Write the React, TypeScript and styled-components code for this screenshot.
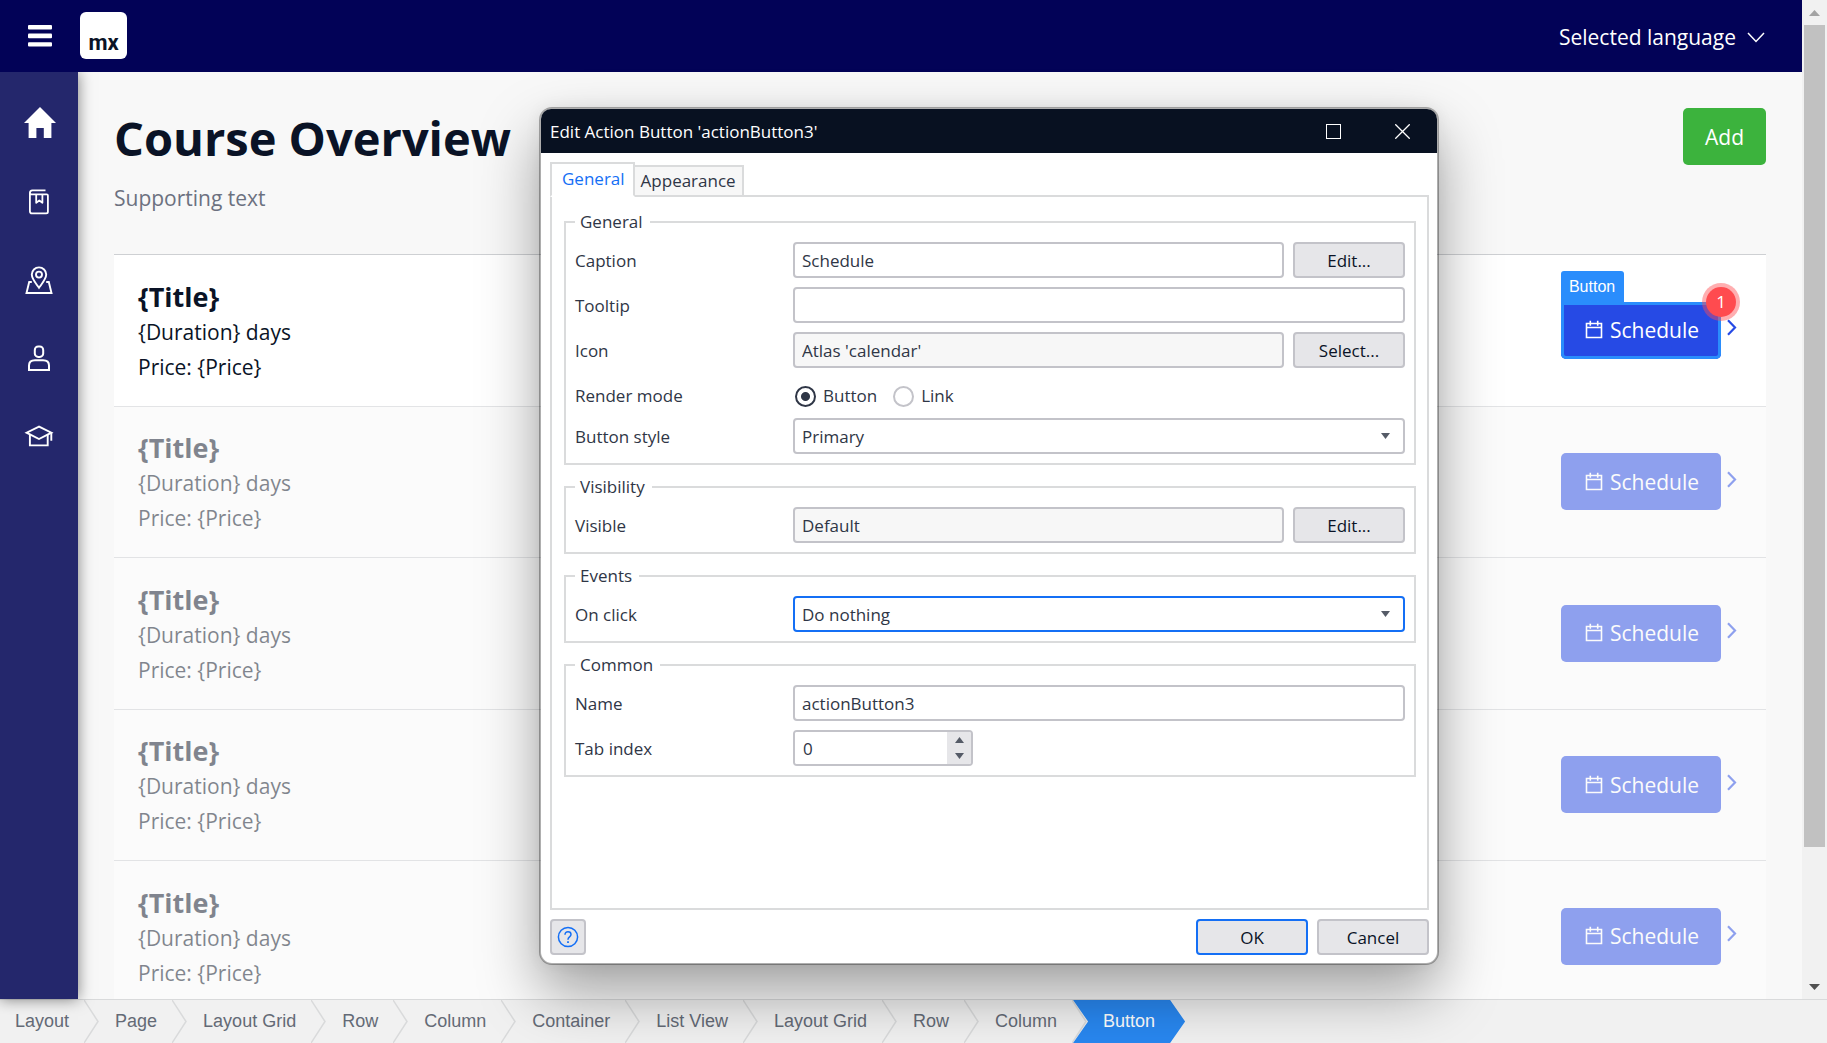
import React, { useState } from "react";
import styled, { createGlobalStyle } from "styled-components";

const sans = `"Open Sans", "Noto Sans", sans-serif`;
const arial = `"Liberation Sans", Arial, sans-serif`;

const GlobalStyle = createGlobalStyle`
  *, *::before, *::after { box-sizing: border-box; }
  body { margin: 0; font-family: ${sans}; font-size: 21px; color: #0a1326; background: #f8f8f8; overflow: hidden; }
  button, input, select { font-family: inherit; }
  svg { display: block; flex: none; }
`;

/* ---------- page shell ---------- */

const Shell = styled.div`
  position: relative;
  display: flex;
  flex-direction: column;
  height: 100vh;
`;

const Viewport = styled.div`
  flex: 1;
  min-height: 0;
  display: flex;
`;

const Page = styled.div`
  flex: 1;
  min-width: 0;
  display: flex;
  flex-direction: column;
`;

const TopBar = styled.header`
  position: relative;
  z-index: 2;
  flex: none;
  height: 72px;
  padding: 0 36px 0 28px;
  display: flex;
  align-items: center;
  background: #020257;
  color: #fff;
`;

const PlainButton = styled.button`
  display: flex;
  align-items: center;
  padding: 0;
  border: 0;
  background: none;
  color: inherit;
  font-size: 21px;
`;

const Logo = styled.div`
  display: flex;
  align-items: flex-end;
  justify-content: center;
  width: 47px;
  height: 47px;
  margin: 0 0 1px 28px;
  padding-bottom: 4px;
  border-radius: 6px;
  background: #fff;
  color: #0a1326;
  font: bold 22px/24px Roboto, sans-serif;
`;

const LanguageButton = styled(PlainButton)`
  gap: 10px;
  margin-left: auto;
  padding-top: 2px;
`;

const Body = styled.div`
  flex: 1;
  min-height: 0;
  display: flex;
`;

const SideBar = styled.nav`
  position: relative;
  z-index: 1;
  flex: none;
  width: 78px;
  padding-top: 13px;
  background: #24276c;
  box-shadow: 0 0 14px rgba(0, 0, 0, 0.5);
`;

const SideLink = styled.a`
  display: flex;
  align-items: center;
  justify-content: center;
  height: 78px;
  color: #fff;
`;

const Main = styled.main`
  flex: 1;
  min-width: 0;
  overflow: hidden;
  padding: 36px 36px 0;
`;

const PageHead = styled.div`
  display: flex;
  align-items: flex-start;
  justify-content: space-between;
  margin-bottom: 38px;
`;

const Heading = styled.h1`
  margin: 0 0 12px;
  font-size: 47px;
  line-height: 61px;
  font-weight: 700;
`;

const Supporting = styled.p`
  margin: 0;
  line-height: 35px;
  color: #6c7180;
`;

const ActionButton = styled.button<{ $tone: "success" | "primary"; $selected?: boolean }>`
  display: flex;
  align-items: center;
  justify-content: center;
  gap: 7px;
  height: 57px;
  padding: ${(p) => (p.$tone === "success" ? "0 22px" : "0 22px 0 24px")};
  border: 0;
  border-radius: 5px;
  background: ${(p) => (p.$tone === "success" ? "#3cb33d" : "#264ae5")};
  color: #fff;
  font-size: 21px;
  ${(p) => p.$selected && "box-shadow: inset 0 0 0 3px #2a8dfc; border-top-left-radius: 0;"}
`;

/* ---------- course list ---------- */

const List = styled.ul`
  display: grid;
  grid-auto-rows: 152px 151px;
  margin: 0;
  padding: 0;
  list-style: none;
  border-top: 1px solid #ced0d3;
`;

const Course = styled.li<{ $faded: boolean }>`
  display: flex;
  align-items: center;
  justify-content: space-between;
  padding: 0 29px 0 24px;
  background: #fff;
  border-bottom: 1px solid ${(p) => (p.$faded ? "#ced0d3" : "#e3e4e6")};
  opacity: ${(p) => (p.$faded ? 0.5 : 1)};
`;

const CourseInfo = styled.div`
  padding-top: 2px;
`;

const CourseTitle = styled.h2`
  margin: 0;
  font-size: 27px;
  line-height: 36px;
  font-weight: 700;
`;

const CourseLine = styled.p`
  margin: 0;
  line-height: 35px;
`;

const CourseActions = styled.div`
  display: flex;
  align-items: center;
  gap: 6px;
  padding-bottom: 1px;
  color: #264ae5;
`;

const Selection = styled.div`
  position: relative;
`;

const SelectionTag = styled.span`
  position: absolute;
  left: 0;
  bottom: 100%;
  padding: 0 9px 0 8px;
  border-radius: 3px 3px 0 0;
  background: #2a8dfc;
  color: #fff;
  font: 16px/31px ${arial};
`;

const StepBadge = styled.span`
  position: absolute;
  top: -15px;
  right: -15px;
  width: 30px;
  height: 30px;
  border-radius: 50%;
  background: #ff4b4f;
  box-shadow: 0 0 0 4px rgba(255, 75, 79, 0.45);
  color: #fff;
  font-size: 17px;
  line-height: 30px;
  text-align: center;
`;

/* ---------- scroll bar ---------- */

const ScrollBar = styled.div`
  flex: none;
  width: 25px;
  display: grid;
  grid-template-rows: 25px 1fr 25px;
  justify-items: center;
  align-items: center;
  background: #f1f1f1;
`;

const Thumb = styled.div`
  align-self: start;
  width: 21px;
  height: 86.6%;
  background: #c1c1c1;
`;

/* ---------- breadcrumb bar ---------- */

const CrumbBar = styled.nav`
  flex: none;
  display: flex;
  height: 44px;
  border-top: 1px solid #d9dadb;
  background: #f1f1f1;
  font: 18px/42px ${arial};
`;

const Crumb = styled.a`
  display: flex;
  padding-left: 15px;
  gap: 15px;
  color: #646a76;
  text-decoration: none;
`;

const ActiveCrumb = styled.a`
  margin-left: -15px;
  padding: 0 30px;
  background: #2887f0;
  color: #fff;
  text-decoration: none;
  clip-path: polygon(0 0, calc(100% - 15px) 0, 100% 50%, calc(100% - 15px) 100%, 0 100%, 15px 50%);
`;

/* ---------- dialog ---------- */

const Dialog = styled.section`
  position: absolute;
  z-index: 5;
  top: 107px;
  left: 539px;
  width: 900px;
  border: 2px solid rgba(0, 0, 0, 0.3);
  border-radius: 13px;
  background: #fff;
  background-clip: padding-box;
  box-shadow: 0 28px 60px rgba(0, 0, 0, 0.36), 0 0 16px rgba(0, 0, 0, 0.06);
  color: #2f3646;
  font-size: 17px;
  line-height: 24px;
`;

const TitleBar = styled.header`
  display: flex;
  align-items: center;
  height: 44px;
  padding-left: 9px;
  border-radius: 10px 10px 0 0;
  background: #081121;
  color: #fff;
`;

const DialogTitle = styled.h2`
  flex: 1;
  margin: 0;
  padding-top: 1px;
  font-size: 17px;
  font-weight: 400;
`;

const WindowButton = styled(PlainButton)`
  justify-content: center;
  width: 69px;
  height: 44px;
`;

const DialogBody = styled.div`
  padding: 9px 8px 8px 9px;
`;

const Tabs = styled.div`
  display: flex;
  align-items: flex-end;
`;

const Tab = styled.button<{ $active: boolean }>`
  position: relative;
  z-index: ${(p) => (p.$active ? 1 : 0)};
  height: ${(p) => (p.$active ? "35px" : "32px")};
  margin-bottom: -2px;
  margin-right: -2px;
  padding: ${(p) => (p.$active ? "0 8px 2px 10px" : "0 6px 2px")};
  border: 2px solid #dadbdc;
  border-bottom-color: ${(p) => (p.$active ? "#fff" : "#dadbdc")};
  background: ${(p) => (p.$active ? "#fff" : "#f7f7f7")};
  color: ${(p) => (p.$active ? "#146ff5" : "#2f3646")};
  font-size: 17px;
`;

const Panel = styled.div`
  display: flex;
  flex-direction: column;
  gap: 10px;
  min-height: 715px;
  padding: 13px 11px 13px 12px;
  border: 2px solid #dadbdc;
`;

const Group = styled.fieldset`
  min-width: 0;
  margin: 0;
  padding: 8px 9px 9px;
  border: 2px solid #dadbdc;
`;

const Legend = styled.legend`
  padding: 0 7px 0 5px;
`;

const Fields = styled.div`
  display: grid;
  gap: 9px;
`;

const Field = styled.div<{ $short?: boolean }>`
  display: grid;
  grid-template-columns: 218px 1fr;
  align-items: center;
  height: ${(p) => (p.$short ? "32px" : "36px")};
  padding-top: ${(p) => (p.$short ? "6px" : "0")};
  & > label { padding-top: 2px; }
`;

const Controls = styled.div`
  display: flex;
  gap: 9px;
`;

const TextInput = styled.input`
  flex: 1;
  min-width: 0;
  height: 36px;
  padding: 0 7px;
  border: 2px solid #c3c3c9;
  border-radius: 4px;
  background: #fff;
  color: #2f3646;
  font-size: 17px;
  outline: none;
  &:read-only { background: #f7f7f7; }
`;

const SelectWrap = styled.div`
  position: relative;
  flex: 1;
  & > svg { position: absolute; right: 15px; top: 15px; pointer-events: none; }
`;

const Select = styled.select<{ $focused?: boolean }>`
  appearance: none;
  display: block;
  width: 100%;
  height: 36px;
  padding: 0 7px;
  border: 2px solid ${(p) => (p.$focused ? "#146ff5" : "#c3c3c9")};
  border-radius: 4px;
  background: #fff;
  color: #2f3646;
  font-size: 17px;
  outline: none;
`;

const DialogButton = styled.button<{ $primary?: boolean; $square?: boolean }>`
  display: flex;
  align-items: center;
  justify-content: center;
  flex: none;
  width: ${(p) => (p.$square ? "36px" : "112px")};
  height: 36px;
  padding: 0;
  border: 2px solid ${(p) => (p.$primary ? "#146ff5" : "#c3c3c9")};
  border-radius: 4px;
  background: #e6e6e9;
  color: #0a1326;
  font-size: 17px;
`;

const RadioLabel = styled.label`
  display: flex;
  align-items: center;
  gap: 7px;
  margin: 0 5px 0 2px;
`;

const Radio = styled.input`
  appearance: none;
  width: 21px;
  height: 21px;
  margin: 0;
  border: 2px solid #c3c3c9;
  border-radius: 50%;
  background: #fff;
  &:checked {
    border-color: #2f3646;
    background: radial-gradient(circle, #2f3646 4px, #fff 5px);
  }
`;

const Spinner = styled.div`
  display: flex;
  width: 180px;
  height: 36px;
  border: 2px solid #c3c3c9;
  border-radius: 4px;
  overflow: hidden;
`;

const SpinnerInput = styled.input`
  flex: 1;
  min-width: 0;
  padding: 0 8px;
  border: 0;
  background: #fff;
  color: #2f3646;
  font-size: 17px;
  outline: none;
`;

const Stepper = styled.div`
  display: grid;
  width: 24px;
`;

const StepButton = styled.button`
  display: flex;
  align-items: center;
  justify-content: center;
  padding: 0;
  border: 0;
  background: #e6e6e9;
`;

const Footer = styled.footer`
  display: flex;
  gap: 9px;
  margin-top: 9px;
`;

const Spacer = styled.div`
  flex: 1;
`;

/* ---------- drawings ---------- */

const MenuIcon = () => (
  <svg width="24" height="22" viewBox="0 0 24 22" fill="currentColor">
    <rect y="0" width="24" height="4.6" rx="1" />
    <rect y="8.6" width="24" height="4.6" rx="1" />
    <rect y="17.2" width="24" height="4.4" rx="1" />
  </svg>
);

const ChevronDown = () => (
  <svg width="20" height="14" viewBox="0 0 20 14" fill="none" stroke="currentColor" strokeWidth="1.5">
    <path d="M2 3l8 8.4L18 3" />
  </svg>
);

const HomeIcon = () => (
  <svg width="34" height="34" viewBox="-1 1 34 34" fill="currentColor">
    <path d="M17 1L33 17H28.4V32H20.8V22H13.4V32H5.6V17H1z" />
  </svg>
);

const BookIcon = () => (
  <svg width="28" height="28" viewBox="0 0 28 28" fill="none" stroke="currentColor" strokeWidth="1.8" strokeLinejoin="round">
    <path d="M20.5 2.4H7.4A2.6 2.6 0 0 0 4.9 5v18.2a2.2 2.2 0 0 0 2.2 2.2h14.2a1.6 1.6 0 0 0 1.6-1.6V7.6a1.2 1.2 0 0 0-1.2-1.2H7.3C5.8 6.4 4.9 5.8 4.9 5" />
    <path d="M11.2 6.6v8.2l3.1-2.3 3.1 2.3V6.6" />
  </svg>
);

const PinIcon = () => (
  <svg width="30" height="30" viewBox="0 0 30 30" fill="none" stroke="currentColor" strokeWidth="1.9">
    <path d="M15 22.8C12 18.6 7.8 14 7.8 9.6a7.2 7.2 0 0 1 14.4 0C22.2 14 18 18.6 15 22.8z" />
    <circle cx="15" cy="9.6" r="3" />
    <path d="M7.8 17H5.2L2.5 28h25l-2.7-11h-2.6" />
  </svg>
);

const PersonIcon = () => (
  <svg width="28" height="28" viewBox="0 0 28 28" fill="none" stroke="currentColor" strokeWidth="2">
    <rect x="9.8" y="2.5" width="8.4" height="10.4" rx="3.4" />
    <path d="M4 26v-4.5c0-3.5 2.6-5.3 6-5.3h8c3.4 0 6 1.8 6 5.3V26z" />
  </svg>
);

const GraduateIcon = () => (
  <svg width="30" height="24" viewBox="0 0 30 24" fill="none" stroke="currentColor" strokeWidth="1.9">
    <path d="M15 2.6L2.6 8.7 15 15l12.4-6.3z" />
    <path d="M5.9 10.5v10.9h17.8V10.5M27.3 8.5v8.2" />
  </svg>
);

const CalendarIcon = () => (
  <svg width="18" height="20" viewBox="0 0 18 20" fill="none" stroke="currentColor" strokeWidth="1.6">
    <path d="M1.5 3.5h15v14h-15zM1.500 7.500h15M5.300 0.800v5M12.700 0.800v5" />
  </svg>
);

const ChevronRight = () => (
  <svg width="10" height="22" viewBox="0 0 10 22" fill="none" stroke="currentColor" strokeWidth="2.2">
    <path d="M1 1.3l7 7.2-7 7.2" />
  </svg>
);

const Triangle = ({ up, color = "#555b67", width = 9 }: { up?: boolean; color?: string; width?: number }) => (
  <svg width={width} height="6" viewBox="0 0 10 6" preserveAspectRatio="none" fill={color}>
    <path d={up ? "M0 6h10L5 0z" : "M0 0h10L5 6z"} />
  </svg>
);

const CrumbArrow = () => (
  <svg width="16" height="43" viewBox="0 0 16 43" fill="none" stroke="#d9dadb" strokeWidth="1.5">
    <path d="M0 0l14 21.500L0 43" />
  </svg>
);

const HelpIcon = () => (
  <svg width="22" height="22" viewBox="0 0 22 22" fill="none" stroke="#146ff5" strokeWidth="1.5">
    <circle cx="11" cy="11" r="9.6" />
    <path d="M8 8.800c0-1.900 1.200-3 3-3s3 1.100 3 2.700c0 2.300-3 2.400-3 4.900v.4" />
    <path d="M11 15.300v1.700" strokeWidth="1.8" />
  </svg>
);

const MaximizeIcon = () => (
  <svg width="15" height="15" viewBox="0 0 15 15" fill="none" stroke="currentColor" shapeRendering="crispEdges">
    <rect x="0.5" y="0.5" width="14" height="14" />
  </svg>
);

const CloseIcon = () => (
  <svg width="15" height="15" viewBox="0 0 15 15" fill="none" stroke="currentColor" strokeWidth="1.3">
    <path d="M0.3 0.3l14.4 14.4M14.7 0.3L0.3 14.7" />
  </svg>
);

/* ---------- data ---------- */

const sideLinks = [
  { label: "Home", icon: <HomeIcon /> },
  { label: "Courses", icon: <BookIcon /> },
  { label: "Locations", icon: <PinIcon /> },
  { label: "Teachers", icon: <PersonIcon /> },
  { label: "Trainees", icon: <GraduateIcon /> },
];

const crumbs = ["Layout", "Page", "Layout Grid", "Row", "Column", "Container", "List View", "Layout Grid", "Row", "Column"];

function CourseRow({ selected }: { selected: boolean }) {
  return (
    <Course $faded={!selected}>
      <CourseInfo>
        <CourseTitle>{"{Title}"}</CourseTitle>
        <CourseLine>{"{Duration} days"}</CourseLine>
        <CourseLine>{"Price: {Price}"}</CourseLine>
      </CourseInfo>
      <CourseActions>
        <Selection>
          <ActionButton type="button" $tone="primary" $selected={selected}>
            <CalendarIcon />
            Schedule
          </ActionButton>
          {selected && <SelectionTag>Button</SelectionTag>}
          {selected && <StepBadge>1</StepBadge>}
        </Selection>
        <ChevronRight />
      </CourseActions>
    </Course>
  );
}

function EditDialog() {
  const [tab, setTab] = useState("General");
  const [mode, setMode] = useState("Button");
  const [index, setIndex] = useState(0);

  return (
    <Dialog role="dialog" aria-labelledby="dialog-title">
      <TitleBar>
        <DialogTitle id="dialog-title">Edit Action Button 'actionButton3'</DialogTitle>
        <WindowButton type="button" aria-label="Maximize"><MaximizeIcon /></WindowButton>
        <WindowButton type="button" aria-label="Close"><CloseIcon /></WindowButton>
      </TitleBar>
      <DialogBody>
        <Tabs role="tablist">
          {["General", "Appearance"].map((name) => (
            <Tab key={name} type="button" role="tab" aria-selected={tab === name} $active={tab === name} onClick={() => setTab(name)}>
              {name}
            </Tab>
          ))}
        </Tabs>
        <Panel role="tabpanel">
          <Group>
            <Legend>General</Legend>
            <Fields>
              <Field>
                <label htmlFor="caption">Caption</label>
                <Controls>
                  <TextInput id="caption" defaultValue="Schedule" />
                  <DialogButton type="button">Edit...</DialogButton>
                </Controls>
              </Field>
              <Field>
                <label htmlFor="tooltip">Tooltip</label>
                <Controls>
                  <TextInput id="tooltip" />
                </Controls>
              </Field>
              <Field>
                <label htmlFor="icon">Icon</label>
                <Controls>
                  <TextInput id="icon" readOnly value="Atlas 'calendar'" />
                  <DialogButton type="button">Select...</DialogButton>
                </Controls>
              </Field>
              <Field $short role="radiogroup" aria-labelledby="render-mode">
                <span id="render-mode">Render mode</span>
                <Controls>
                  {["Button", "Link"].map((name) => (
                    <RadioLabel key={name}>
                      <Radio type="radio" name="mode" checked={mode === name} onChange={() => setMode(name)} />
                      {name}
                    </RadioLabel>
                  ))}
                </Controls>
              </Field>
              <Field>
                <label htmlFor="style">Button style</label>
                <SelectWrap>
                  <Select id="style"><option>Primary</option></Select>
                  <Triangle />
                </SelectWrap>
              </Field>
            </Fields>
          </Group>
          <Group>
            <Legend>Visibility</Legend>
            <Field>
              <label htmlFor="visible">Visible</label>
              <Controls>
                <TextInput id="visible" readOnly value="Default" />
                <DialogButton type="button">Edit...</DialogButton>
              </Controls>
            </Field>
          </Group>
          <Group>
            <Legend>Events</Legend>
            <Field>
              <label htmlFor="click">On click</label>
              <SelectWrap>
                <Select id="click" $focused><option>Do nothing</option></Select>
                <Triangle />
              </SelectWrap>
            </Field>
          </Group>
          <Group>
            <Legend>Common</Legend>
            <Fields>
              <Field>
                <label htmlFor="name">Name</label>
                <Controls>
                  <TextInput id="name" defaultValue="actionButton3" />
                </Controls>
              </Field>
              <Field>
                <label htmlFor="tab-index">Tab index</label>
                <Spinner>
                  <SpinnerInput id="tab-index" inputMode="numeric" value={index} onChange={(e) => setIndex(Number(e.target.value) || 0)} />
                  <Stepper>
                    <StepButton type="button" aria-label="Increase" onClick={() => setIndex(index + 1)}><Triangle up /></StepButton>
                    <StepButton type="button" aria-label="Decrease" onClick={() => setIndex(index - 1)}><Triangle /></StepButton>
                  </Stepper>
                </Spinner>
              </Field>
            </Fields>
          </Group>
        </Panel>
        <Footer>
          <DialogButton type="button" $square aria-label="Help"><HelpIcon /></DialogButton>
          <Spacer />
          <DialogButton type="button" $primary>OK</DialogButton>
          <DialogButton type="button">Cancel</DialogButton>
        </Footer>
      </DialogBody>
    </Dialog>
  );
}

export default function App() {
  return (
    <Shell>
      <GlobalStyle />
      <Viewport>
        <Page>
          <TopBar>
            <PlainButton type="button" aria-label="Menu"><MenuIcon /></PlainButton>
            <Logo>mx</Logo>
            <LanguageButton type="button">
              Selected language
              <ChevronDown />
            </LanguageButton>
          </TopBar>
          <Body>
            <SideBar>
              {sideLinks.map((link) => (
                <SideLink key={link.label} href="#" aria-label={link.label}>{link.icon}</SideLink>
              ))}
            </SideBar>
            <Main>
              <PageHead>
                <div>
                  <Heading>Course Overview</Heading>
                  <Supporting>Supporting text</Supporting>
                </div>
                <ActionButton type="button" $tone="success">Add</ActionButton>
              </PageHead>
              <List>
                {[0, 1, 2, 3, 4].map((n) => (
                  <CourseRow key={n} selected={n === 0} />
                ))}
              </List>
            </Main>
          </Body>
        </Page>
        <ScrollBar aria-hidden="true">
          <Triangle up color="#a3a3a3" width={11} />
          <Thumb />
          <Triangle color="#505050" width={11} />
        </ScrollBar>
      </Viewport>
      <CrumbBar aria-label="Breadcrumb">
        {crumbs.map((name, i) => (
          <Crumb key={i} href="#">
            {name}
            <CrumbArrow />
          </Crumb>
        ))}
        <ActiveCrumb href="#" aria-current="page">Button</ActiveCrumb>
      </CrumbBar>
      <EditDialog />
    </Shell>
  );
}
